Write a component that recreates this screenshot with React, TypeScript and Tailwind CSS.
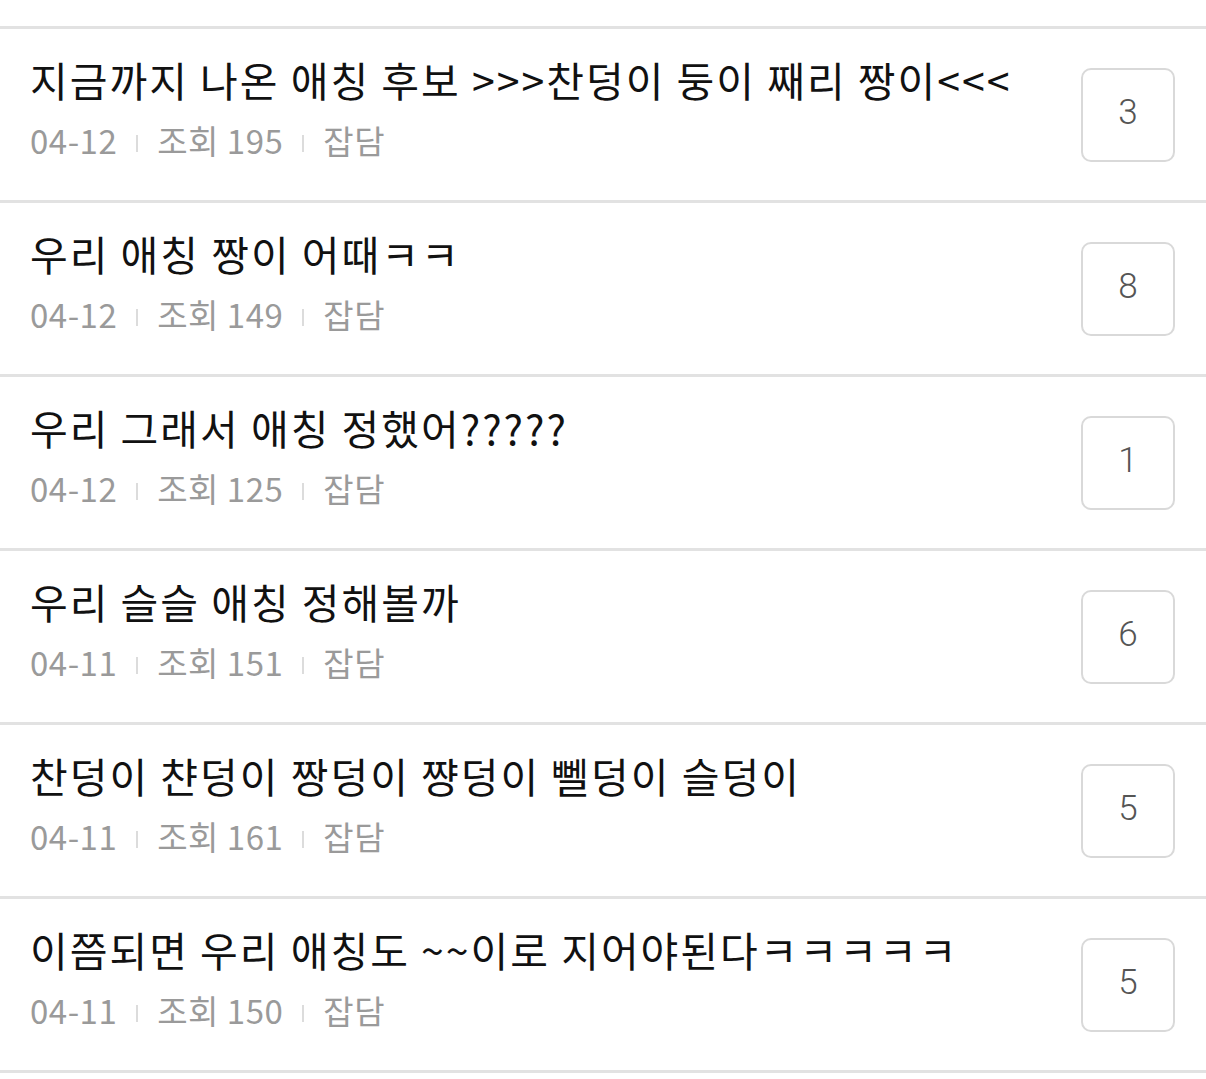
import React from "react";

interface Post {
  title: string;
  date: string;
  views: number;
  category: string;
  comments: number;
}

const posts: Post[] = [
  { title: "지금까지 나온 애칭 후보 >>>찬덩이 둥이 째리 짱이<<<", date: "04-12", views: 195, category: "잡담", comments: 3 },
  { title: "우리 애칭 짱이 어때ㅋㅋ", date: "04-12", views: 149, category: "잡담", comments: 8 },
  { title: "우리 그래서 애칭 정했어?????", date: "04-12", views: 125, category: "잡담", comments: 1 },
  { title: "우리 슬슬 애칭 정해볼까", date: "04-11", views: 151, category: "잡담", comments: 6 },
  { title: "찬덩이 챤덩이 짱덩이 쨩덩이 뻴덩이 슬덩이", date: "04-11", views: 161, category: "잡담", comments: 5 },
  { title: "이쯤되면 우리 애칭도 ~~이로 지어야된다ㅋㅋㅋㅋㅋ", date: "04-11", views: 150, category: "잡담", comments: 5 },
];

const Bar = () => (
  <span className="mx-[19px] mt-[8px] inline-block h-[17px] w-[2px] bg-[#dcdcdc]" />
);

const PostRow: React.FC<{ post: Post }> = ({ post }) => (
  <div className="flex h-[174px] items-center border-b-[3px] border-[#e2e2e2] pl-[30px] pr-[31px]">
    <div className="flex min-w-0 flex-1 flex-col pb-[16px]">
      <div className="whitespace-nowrap text-[41px] leading-[50px] tracking-[2px] text-[#111]">
        {post.title}
      </div>
      <div className="mt-[16px] flex items-center whitespace-nowrap text-[33px] leading-[40px] tracking-[0.5px] text-[#9a9a9a] proportional-nums">
        <span>{post.date}</span>
        <Bar />
        <span>조회 {post.views}</span>
        <Bar />
        <span>{post.category}</span>
      </div>
    </div>
    <div
      className="flex h-[94px] w-[94px] shrink-0 items-center justify-center rounded-[10px] border-[2px] border-[#d9d9d9] pb-[3px] text-[35px] font-light text-[#555]"
      style={{ fontFamily: 'Roboto, "Noto Sans", sans-serif' }}
    >
      {post.comments}
    </div>
  </div>
);

export default function App() {
  return (
    <div
      className="w-[1206px] bg-white"
      style={{ fontFamily: '"Noto Sans CJK KR", "Noto Sans", sans-serif' }}
    >
      <div className="h-[29px] border-b-[3px] border-[#e2e2e2]" />
      {posts.map((p, i) => (
        <PostRow key={i} post={p} />
      ))}
    </div>
  );
}
